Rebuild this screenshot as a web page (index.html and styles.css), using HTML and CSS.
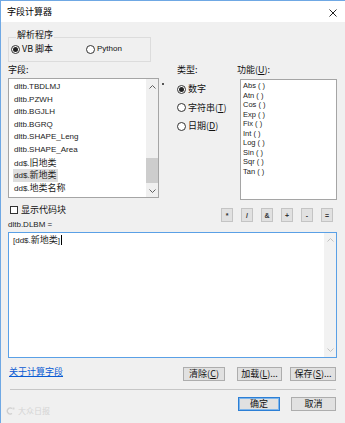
FILE: index.html
```html
<!DOCTYPE html>
<html lang="zh-CN">
<head>
<meta charset="utf-8">
<title>字段计算器</title>
<link rel="stylesheet" href="styles.css">
</head>
<body>
<div class="win">
  <div class="titlebar">
    <span class="title">字段计算器</span>
    <svg class="close" width="8" height="8" viewBox="0 0 8 8"><path d="M0.5 0.5L7.5 7.5M7.5 0.5L0.5 7.5" stroke="#222" stroke-width="1" fill="none"/></svg>
  </div>
  <div class="content">
    <div class="group">
      <span class="cap">解析程序</span>
      <div class="radios">
        <div class="radio vb"><span class="rb on"></span><span>VB 脚本</span></div>
        <div class="radio"><span class="rb"></span><span class="lat">Python</span></div>
      </div>
    </div>

    <div class="main">
      <div class="fields">
        <div class="lbl">字段:</div>
        <div class="listbox">
          <div class="items">
            <div class="it">dltb.TBDLMJ</div>
            <div class="it">dltb.PZWH</div>
            <div class="it">dltb.BGJLH</div>
            <div class="it">dltb.BGRQ</div>
            <div class="it">dltb.SHAPE_Leng</div>
            <div class="it">dltb.SHAPE_Area</div>
            <div class="it">dd$.<span class="cjk">旧地类</span></div>
            <div class="it"><span class="sel">dd$.<span class="cjk">新地类</span></span></div>
            <div class="it">dd$.<span class="cjk">地类名称</span></div>
          </div>
          <div class="vscroll">
            <div class="arr up"><svg width="7" height="4" viewBox="0 0 7 4"><path d="M0.5 3.5L3.5 0.5L6.5 3.5" stroke="#606060" fill="none"/></svg></div>
            <div class="sp"></div>
            <div class="thumb"></div>
            <div class="gap2"></div>
            <div class="arr down"><svg width="7" height="4" viewBox="0 0 7 4"><path d="M0.5 0.5L3.5 3.5L6.5 0.5" stroke="#606060" fill="none"/></svg></div>
          </div>
        </div>
      </div>
      <div class="tick"></div>
      <div class="types">
        <div class="lbl">类型:</div>
        <div class="typelist">
          <div class="radio"><span class="rb on"></span><span>数字</span></div>
          <div class="radio"><span class="rb"></span><span>字符串(<u>T</u>)</span></div>
          <div class="radio"><span class="rb"></span><span>日期(<u>D</u>)</span></div>
        </div>
      </div>
      <div class="funcs">
        <div class="lbl flbl">功能(<u>U</u>):</div>
        <div class="funcbox">
          <div class="fn">Abs ( )</div>
          <div class="fn">Atn ( )</div>
          <div class="fn">Cos ( )</div>
          <div class="fn">Exp ( )</div>
          <div class="fn">Fix ( )</div>
          <div class="fn">Int ( )</div>
          <div class="fn">Log ( )</div>
          <div class="fn">Sin ( )</div>
          <div class="fn">Sqr ( )</div>
          <div class="fn">Tan ( )</div>
        </div>
      </div>
    </div>

    <div class="mid">
      <div class="midleft">
        <div class="chk"><span class="cb"></span><span>显示代码块</span></div>
        <div class="exprlbl">dltb.DLBM =</div>
      </div>
      <div class="ops">
        <span class="op">*</span>
        <span class="op">/</span>
        <span class="op">&amp;</span>
        <span class="op">+</span>
        <span class="op">-</span>
        <span class="op">=</span>
      </div>
    </div>

    <div class="expr">
      <div class="exprtext">[dd$.<span class="cjk">新地类</span>]<span class="caret"></span></div>
      <div class="vscroll light">
        <div class="arr tup"><svg width="7" height="4" viewBox="0 0 7 4"><path d="M0.5 3.5L3.5 0.5L6.5 3.5" stroke="#c2c2c2" fill="none"/></svg></div>
        <div class="sp"></div>
        <div class="arr tdown"><svg width="7" height="4" viewBox="0 0 7 4"><path d="M0.5 0.5L3.5 3.5L6.5 0.5" stroke="#c2c2c2" fill="none"/></svg></div>
      </div>
    </div>

    <div class="bottom">
      <a class="link" href="#">关于计算字段</a>
      <div class="btns">
        <span class="btn b1">清除(<u>C</u>)</span>
        <span class="btn b2">加载(<u>L</u>)...</span>
        <span class="btn b3">保存(<u>S</u>)...</span>
      </div>
    </div>

    <div class="sep"></div>

    <div class="okrow">
      <span class="btn ok">确定</span>
      <span class="btn cancel">取消</span>
    </div>
  </div>
  <div class="wm"><svg width="9" height="8" viewBox="0 0 9 8"><path d="M6 1.5A3 3 0 1 0 6 6.5" stroke="#cfcfcf" stroke-width="1.4" fill="none"/><rect x="6.5" y="0.5" width="2" height="2" fill="#d6d6d6"/></svg><span>大众日报</span></div>
</div>
</body>
</html>
```

FILE: styles.css
```css
* { box-sizing: border-box; }
html, body { margin: 0; padding: 0; }
body {
  width: 345px;
  height: 423px;
  overflow: hidden;
  background: #f0f0f0;
  font-family: "Noto Sans CJK SC", "Liberation Sans", sans-serif;
  font-size: 9px;
  color: #111;
}
u { text-decoration: underline; text-underline-offset: 1px; }

.win {
  position: relative;
  width: 345px;
  height: 423px;
  border-left: 1px solid #6fa8e4;
  background: #f0f0f0;
  display: flex;
  flex-direction: column;
}

.titlebar {
  height: 22px;
  flex: none;
  background: #fff;
  border-top: 1px solid #6fa8e4;
  display: flex;
  align-items: center;
  justify-content: space-between;
  padding: 0 8px 0 6px;
}
.title { line-height: 12px; font-size: 9px; color: #000; }
.close { margin-top: 3px; }

.content {
  padding: 0 8px 0 7px;
  display: flex;
  flex-direction: column;
}

/* group box */
.group {
  margin-top: 15px;
  width: 143px;
  border: 1px solid #dcdcdc;
  padding: 0 0 6px 2px;
  display: flex;
  flex-direction: column;
}
.cap {
  align-self: flex-start;
  margin: -9px 0 0 5px;
  padding: 0 1px;
  background: #f0f0f0;
  line-height: 12px;
}
.radios {
  display: flex;
  height: 12px;
  align-items: center;
  margin-top: 2px;
}
.radio {
  display: flex;
  align-items: center;
  gap: 2px;
  height: 12px;
  line-height: 12px;
}
.radio.vb { width: 75px; }
.lat { font-family: "Liberation Sans", sans-serif; font-size: 8px; }
.rb {
  width: 9px;
  height: 9px;
  border: 1px solid #333;
  border-radius: 50%;
  background: #fff;
  display: flex;
  align-items: center;
  justify-content: center;
  flex: none;
}
.rb.on::after {
  content: "";
  width: 5px;
  height: 5px;
  border-radius: 50%;
  background: #222;
}

/* main row */
.main {
  display: flex;
  margin-top: 2px;
}
.lbl {
  height: 12px;
  line-height: 12px;
  margin-bottom: 2px;
}
.fields { width: 151px; flex: none; }
.listbox {
  height: 120px;
  border: 1px solid #a5a5a5;
  background: #fff;
  display: flex;
}
.items {
  flex: 1;
  padding: 2px 0 0 5px;
  font-family: "Liberation Sans", "Noto Sans CJK SC", sans-serif;
  font-size: 8px;
  color: #222;
}
.it { height: 12.6px; line-height: 12.6px; white-space: nowrap; }
.cjk { font-family: "Noto Sans CJK SC", sans-serif; font-size: 9px; }
.sel { display: inline-block; background: #dedede; padding: 0 1px; margin-left: -1px; line-height: 12px; }

.vscroll {
  width: 12px;
  flex: none;
  background: #f0f0f0;
  display: flex;
  flex-direction: column;
  align-items: stretch;
}
.arr { display: flex; align-items: center; justify-content: center; }
.arr.up { height: 16px; }
.arr.down { height: 12px; }
.sp { flex: 1; }
.thumb { height: 25px; background: #cdcdcd; }
.gap2 { height: 2px; }

.tick {
  width: 2px;
  height: 2px;
  background: #555;
  margin: 19px 0 0 3px;
  flex: none;
}

.types { flex: 1; margin-left: 13px; }
.typelist {
  margin-top: 7px;
  display: flex;
  flex-direction: column;
  gap: 6.7px;
}

.funcs { width: 97px; flex: none; }
.flbl { margin-left: -3px; margin-bottom: 3px; }
.funcbox {
  height: 121px;
  border: 1px solid #a5a5a5;
  background: #fff;
  padding: 1px 0 0 2px;
  font-family: "Liberation Sans", sans-serif;
  font-size: 7.5px;
  color: #222;
}
.fn { height: 9.5px; line-height: 9.5px; white-space: pre; }

/* middle */
.mid {
  display: flex;
  align-items: flex-start;
  justify-content: space-between;
}
.chk {
  margin-top: 4px;
  height: 12px;
  line-height: 12px;
  display: flex;
  align-items: center;
  gap: 3px;
  padding-left: 2px;
}
.cb {
  width: 8px;
  height: 8px;
  border: 1px solid #333;
  background: #fff;
  flex: none;
}
.exprlbl {
  margin-top: 3px;
  height: 12px;
  line-height: 12px;
  font-family: "Liberation Sans", sans-serif;
  font-size: 8px;
  color: #222;
}
.ops {
  margin-top: 8px;
  margin-right: 4px;
  display: flex;
  gap: 8px;
}
.op {
  width: 12px;
  height: 14px;
  border: 1px solid #c4c4c4;
  background: #e1e1e1;
  display: flex;
  align-items: center;
  justify-content: center;
  font-family: "Liberation Sans", sans-serif;
  font-weight: bold;
  font-size: 7px;
  color: #333;
}

/* expression box */
.expr {
  margin-top: 1px;
  height: 126px;
  border: 1px solid #5aa0e6;
  background: #fff;
  display: flex;
}
.exprtext {
  flex: 1;
  padding: 1px 0 0 4px;
  height: 13px;
  line-height: 12px;
  font-family: "Liberation Sans", "Noto Sans CJK SC", sans-serif;
  font-size: 8px;
  color: #222;
  white-space: nowrap;
}
.caret {
  display: inline-block;
  width: 1px;
  height: 10px;
  background: #000;
  vertical-align: -2px;
  margin-left: 1px;
}
.vscroll.light { background: #f2f2f2; }
.arr.tup { height: 14px; }
.arr.tdown { height: 14px; }

/* bottom */
.bottom {
  display: flex;
  align-items: flex-start;
  justify-content: space-between;
}
.link {
  margin-top: 8px;
  line-height: 12px;
  height: 12px;
  color: #0a5bd3;
  text-decoration: underline;
  margin-left: 1px;
}
.btns { display: flex; margin-top: 9px; }
.btn {
  height: 14px;
  border: 1px solid #adadad;
  background: #e1e1e1;
  display: flex;
  align-items: center;
  justify-content: center;
  line-height: 12px;
  font-size: 9px;
  color: #111;
  white-space: nowrap;
}
.b1 { width: 42px; margin-right: 12px; }
.b2 { width: 45px; margin-right: 8px; }
.b3 { width: 46px; margin-right: 1px; }

.sep {
  margin: 8px 1px 0 2px;
  height: 1px;
  background: #c6c6c6;
}

.okrow {
  margin-top: 7px;
  display: flex;
  justify-content: flex-end;
}
.ok { width: 42px; margin-right: 11px; border: 1px solid #2b7fd6; box-shadow: inset 0 0 0 1px #7fb5ea; }
.cancel { width: 45px; margin-right: 1px; }

.wm {
  position: absolute;
  left: 5px;
  top: 406px;
  display: flex;
  align-items: center;
  gap: 3px;
  color: #d4d4d4;
  font-size: 8px;
  line-height: 10px;
}
```
